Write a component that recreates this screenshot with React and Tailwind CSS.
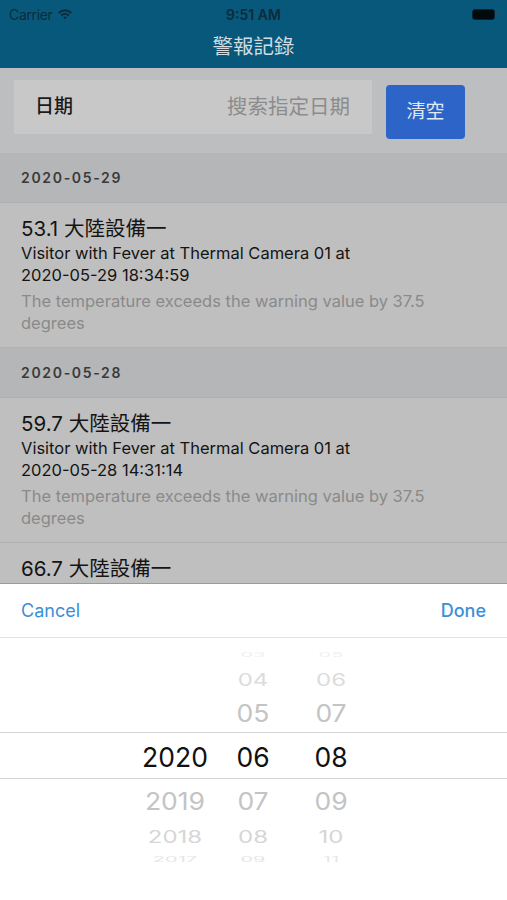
import React from "react";

const alarms = [
  {
    date: "2020-05-29",
    items: [
      {
        title: "53.1 大陸設備一",
        text: "Visitor with Fever at Thermal Camera 01 at",
        stamp: "2020-05-29 18:34:59",
        note: "The temperature exceeds the warning value by 37.5 degrees",
      },
    ],
  },
  {
    date: "2020-05-28",
    items: [
      {
        title: "59.7 大陸設備一",
        text: "Visitor with Fever at Thermal Camera 01 at",
        stamp: "2020-05-28 14:31:14",
        note: "The temperature exceeds the warning value by 37.5 degrees",
      },
      {
        title: "66.7 大陸設備一",
        text: "Visitor with Fever at Thermal Camera 01 at",
        stamp: "2020-05-28 14:20:03",
        note: "The temperature exceeds the warning value by 37.5 degrees",
      },
    ],
  },
];

const font = { fontFamily: "Inter, 'Noto Sans CJK TC', sans-serif" };

const StatusBar = () => (
  <div className="relative flex h-[28px] items-center px-[9px] text-[14px] text-[#0d2b3a]">
    <span className="tracking-tight">Carrier</span>
    <svg width="16" height="12" viewBox="0 0 16 12" className="ml-[5px]">
      <path d="M1 4.2a10 10 0 0 1 14 0l-1.4 1.5a8 8 0 0 0-11.2 0z" fill="#0d2b3a" />
      <path d="M3.6 6.8a6.3 6.3 0 0 1 8.8 0l-1.4 1.5a4.3 4.3 0 0 0-6 0z" fill="#0d2b3a" />
      <path d="M6.2 9.4a2.6 2.6 0 0 1 3.6 0L8 11.3z" fill="#0d2b3a" />
    </svg>
    <span className="absolute left-1/2 -translate-x-1/2 font-semibold">9:51 AM</span>
    <div className="ml-auto mr-[1px] flex items-center">
      <div className="h-[11px] w-[23px] rounded-[3px] border border-[#052533] bg-[#020a0e]" />
      <div className="ml-[1px] h-[4px] w-[1.5px] rounded-r bg-[#2c4f60]" />
    </div>
  </div>
);

const Cell = ({ item }) => {
  const [day, time] = item.stamp.split(" ");
  return (
    <div className="border-b border-[#b0b0b0] bg-[#bfbfbf] pb-[13px] pl-[21px] pr-[68px] pt-[13px]">
      <div className="text-[20.5px] leading-[26px] text-[#141414]">{item.title}</div>
      <div className="text-[16.5px] leading-[22px] text-[#141414]">
        {item.text} <span className="whitespace-nowrap">{day}</span> {time}
      </div>
      <div className="mt-[4px] text-[16.5px] leading-[22px] text-[#8a8a8a]">{item.note}</div>
    </div>
  );
};

const rows = [
  { h: "h-[20px]", y: "", m: "03", d: "05", cls: "text-[20px] text-[#efefef] scale-y-[0.3]" },
  { h: "h-[30px]", y: "", m: "04", d: "06", cls: "text-[24px] text-[#dcdcdc] scale-y-[0.7]" },
  { h: "h-[37px]", y: "", m: "05", d: "07", cls: "text-[26.5px] text-[#c4c4c4] scale-y-[0.9]" },
  { h: "h-[47px]", y: "2020", m: "06", d: "08", cls: "text-[26.5px] text-[#111111]", sel: true },
  { h: "h-[44px]", y: "2019", m: "07", d: "09", cls: "text-[26.5px] text-[#c4c4c4] scale-y-[0.9]" },
  { h: "h-[28px]", y: "2018", m: "08", d: "10", cls: "text-[24px] text-[#d6d6d6] scale-y-[0.7]" },
  { h: "h-[18px]", y: "2017", m: "09", d: "11", cls: "text-[20px] text-[#e6e6e6] scale-y-[0.35]" },
];

const Picker = () => (
  <div className="flex h-[317px] flex-col border-t border-[#9a9a9a] bg-white">
    <div className="flex h-[54px] items-center justify-between border-b border-[#e3e3e3] px-[21px] text-[18px] text-[#3d8fd6]">
      <span>Cancel</span>
      <span className="font-medium">Done</span>
    </div>
    <div className="overflow-hidden pt-[7px]">
      {rows.map((r, i) => (
        <div
          key={i}
          className={`flex items-center pl-[136px] ${r.h} ${r.sel ? "border-y border-[#d4d4d4]" : ""}`}
        >
          {[r.y, r.m, r.d].map((v, j) => (
            <div key={j} className={`w-[78px] text-center leading-none ${r.cls} ${r.sel ? "translate-y-[2px]" : ""}`}>
              {v}
            </div>
          ))}
        </div>
      ))}
    </div>
  </div>
);

export default function App() {
  return (
    <div className="flex h-[900px] w-[507px] flex-col overflow-hidden bg-[#bdbebf]" style={font}>
      <div className="bg-[#07587a]">
        <StatusBar />
        <div className="flex h-[40px] items-center justify-center pb-[2px] text-[20.5px] text-[#d3dce1]">
          警報記錄
        </div>
      </div>

      <div className="flex-1 overflow-hidden">
        <div className="flex h-[85px] items-start gap-[14px] px-[14px] pt-[12px]">
          <div className="flex h-[54px] flex-1 items-center justify-between bg-[#c8c8c8] pl-[21px] pr-[22px]">
            <span className="text-[19px] font-medium text-[#1a1a1a]">日期</span>
            <span className="text-[20.5px] text-[#8c8c8c]">搜索指定日期</span>
          </div>
          <button className="mt-[5px] mr-[28px] h-[54px] w-[79px] rounded-[4px] bg-[#2d64c7] text-[19px] text-[#e2e8f3]">
            清空
          </button>
        </div>

        {alarms.map((g) => (
          <div key={g.date}>
            <div className="flex h-[50px] items-center border-b border-[#b0b0b0] bg-[#b5b6b8] px-[21px] text-[14px] font-semibold tracking-[0.12em] text-[#3a3a3a]">
              {g.date}
            </div>
            {g.items.map((it, i) => (
              <Cell key={i} item={it} />
            ))}
          </div>
        ))}
      </div>

      <Picker />
    </div>
  );
}
